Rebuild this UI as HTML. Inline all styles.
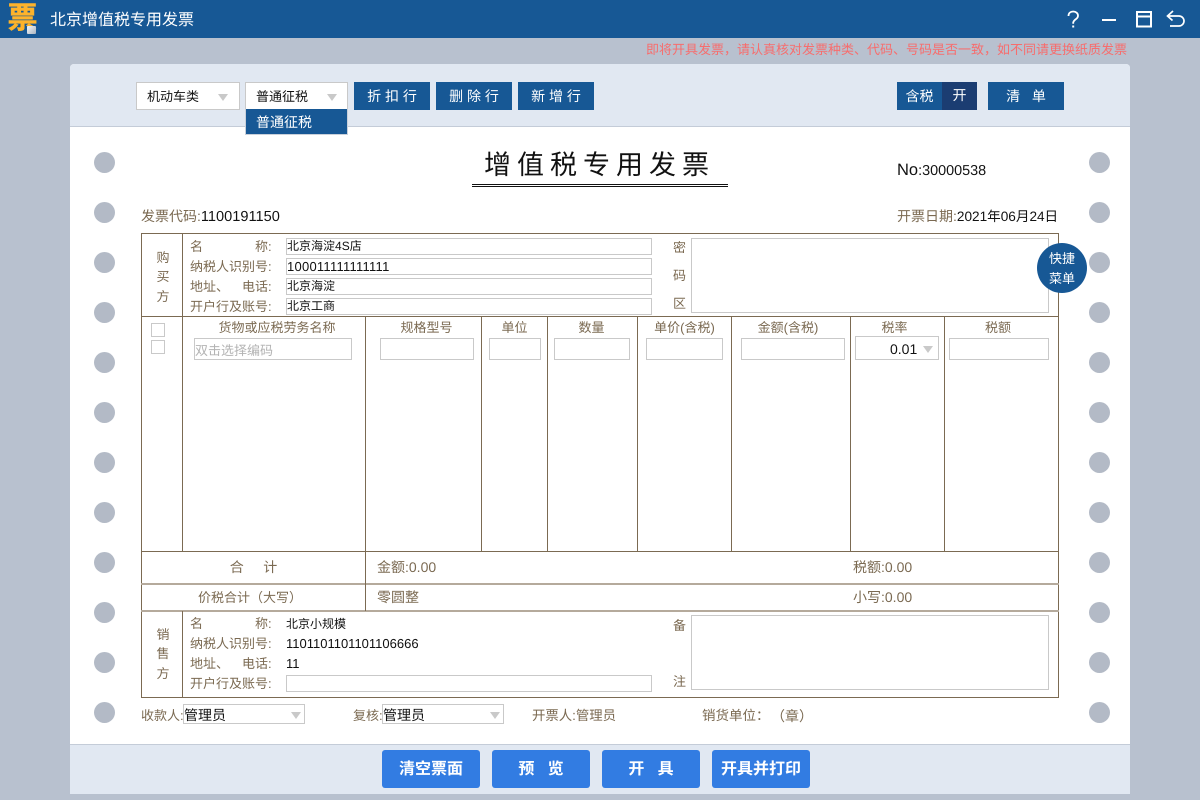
<!DOCTYPE html>
<html lang="zh">
<head>
<meta charset="utf-8">
<title>北京增值税专用发票</title>
<style>
html,body{margin:0;padding:0;width:1200px;height:800px;overflow:hidden;background:#b8c1cf}
body{position:relative;font-family:"Liberation Sans","Noto Sans CJK SC",sans-serif;font-size:13px;color:#7b6a52;text-rendering:geometricPrecision}
div,span{position:absolute;box-sizing:border-box}
.t{white-space:nowrap;line-height:18px;height:18px;margin-top:1px}
.f{font-size:14px}
.k{color:#111}
.c{text-align:center}
.h{background:#7b6a52;height:1px}
.v{background:#7b6a52;width:1px}
.box{background:#fff;border:1px solid #c9c9c9;white-space:nowrap;color:#111}
.val{font-size:12px;line-height:15px;padding-left:0}
.num{position:static;font-size:13px}
.btn{background:#175895;color:#fff;text-align:center;height:28px;line-height:28px;top:82px;white-space:nowrap;font-size:14px}
.sel{background:#fff;border:1px solid #c9c9c9;color:#111;white-space:nowrap}
.tri{width:0;height:0;border-left:5px solid transparent;border-right:5px solid transparent;border-top:7px solid #c9c9c9}
.hole{width:21px;height:21px;border-radius:50%;background:#b3bac6}
.b2{background:#327ce2;color:#fff;font-size:16px;font-weight:bold;text-align:center;height:38px;line-height:40px;top:750px;width:98px;border-radius:3px;white-space:nowrap}
</style>
</head>
<body>
<!-- top bar -->
<div style="left:0;top:0;width:1200px;height:38px;background:#175895"></div>
<div style="left:7px;top:1px;width:31px;height:38px;line-height:36px;font-size:30px;font-weight:bold;color:#fdb32b;text-align:center;white-space:nowrap;-webkit-text-stroke:.5px #fdb32b">票</div>
<div style="left:27px;top:26px;width:9px;height:8px;background:linear-gradient(135deg,#f4f6f8,#aab4c0);border-radius:1px"></div>
<div class="t" style="left:50px;top:11px;font-size:16px;color:#fff">北京增值税专用发票</div>
<svg style="position:absolute;left:1060px;top:6px" width="140" height="26" viewBox="0 0 140 26" fill="none" stroke="#fff">
<path d="M8.500 10c0-3 2-4.500 4.700-4.500s4.800 1.800 4.800 4.200c0 3.800-4.800 3.600-4.800 7.300v.8" stroke-width="1.800"/>
<path d="M13.200 19.500v2" stroke-width="2"/>
<path d="M42 14h14" stroke-width="2"/>
<path d="M77 6h14v14.500h-14zM77 10.500h14" stroke-width="2"/>
<path d="M108 10h11c3 0 5 2.500 5 5s-2 5-5 5h-9" stroke-width="1.700"/>
<path d="M113 5l-5.500 5 5 4.500" stroke-width="1.700"/>
</svg>
<div class="t" style="left:646px;top:40px;font-size:13px;color:#f76d6d">即将开具发票，请认真核对发票种类、代码、号码是否一致，如不同请更换纸质发票</div>

<!-- card -->
<div style="left:70px;top:64px;width:1060px;height:730px;background:#fff;border-radius:4px 4px 0 0;overflow:hidden"></div>
<div style="left:70px;top:64px;width:1060px;height:63px;background:#e1e8f2;border-bottom:1px solid #c4ccd8;border-radius:4px 4px 0 0"></div>
<div style="left:70px;top:744px;width:1060px;height:50px;background:#e1e8f2;border-top:1px solid #c4ccd8"></div>

<!-- toolbar -->
<div class="sel" style="left:136px;top:82px;width:104px;height:28px;line-height:28px;padding-left:10px">机动车类</div>
<div class="tri" style="left:218px;top:94px"></div>
<div class="sel" style="left:245px;top:82px;width:103px;height:28px;line-height:28px;padding-left:10px">普通征税</div>
<div class="tri" style="left:327px;top:94px"></div>
<div style="left:245px;top:109px;width:103px;height:26px;background:#175895;border:1px solid #c9d0da;border-top:0;color:#fff;line-height:27px;padding-left:10px;white-space:nowrap;font-size:14px">普通征税</div>
<div class="btn" style="left:354px;width:76px">折 扣 行</div>
<div class="btn" style="left:436px;width:76px">删 除 行</div>
<div class="btn" style="left:518px;width:76px">新 增 行</div>
<div class="btn" style="left:897px;width:45px">含税</div>
<div class="btn" style="left:942px;width:35px;background:#1b3d72;line-height:26px">开</div>
<div class="btn" style="left:988px;width:76px">清&nbsp;&nbsp;&nbsp;单</div>

<!-- holes -->
<div class="hole" style="left:94px;top:152px"></div><div class="hole" style="left:1089px;top:152px"></div>
<div class="hole" style="left:94px;top:202px"></div><div class="hole" style="left:1089px;top:202px"></div>
<div class="hole" style="left:94px;top:252px"></div><div class="hole" style="left:1089px;top:252px"></div>
<div class="hole" style="left:94px;top:302px"></div><div class="hole" style="left:1089px;top:302px"></div>
<div class="hole" style="left:94px;top:352px"></div><div class="hole" style="left:1089px;top:352px"></div>
<div class="hole" style="left:94px;top:402px"></div><div class="hole" style="left:1089px;top:402px"></div>
<div class="hole" style="left:94px;top:452px"></div><div class="hole" style="left:1089px;top:452px"></div>
<div class="hole" style="left:94px;top:502px"></div><div class="hole" style="left:1089px;top:502px"></div>
<div class="hole" style="left:94px;top:552px"></div><div class="hole" style="left:1089px;top:552px"></div>
<div class="hole" style="left:94px;top:602px"></div><div class="hole" style="left:1089px;top:602px"></div>
<div class="hole" style="left:94px;top:652px"></div><div class="hole" style="left:1089px;top:652px"></div>
<div class="hole" style="left:94px;top:702px"></div><div class="hole" style="left:1089px;top:702px"></div>

<!-- title -->
<div style="left:484px;top:147px;width:240px;height:36px;line-height:36px;font-size:27px;letter-spacing:6px;color:#111;white-space:nowrap">增值税专用发票</div>
<div style="left:472px;top:184px;width:256px;height:3px;border-top:1px solid #111;border-bottom:1px solid #111"></div>
<div class="t k" style="left:897px;top:160px;font-size:14.400px"><span style="position:static;font-size:16.500px">No</span>:30000538</div>
<div class="t f" style="left:141px;top:206px">发票代码:<span class="k" style="position:static;font-size:14.600px">1100191150</span></div>
<div class="t f" style="left:897px;top:206px">开票日期:<span class="k" style="position:static;font-size:13.600px">2021年06月24日</span></div>

<!-- table frame -->
<div style="left:141px;top:233px;width:918px;height:465px;border:1px solid #7b6a52"></div>
<div class="h" style="left:141px;top:316px;width:918px"></div>
<div class="h" style="left:141px;top:551px;width:918px"></div>
<div class="h" style="left:141px;top:583px;width:918px;height:2px;background:#b5aa9c"></div>
<div class="h" style="left:141px;top:610px;width:918px;height:2px;background:#b5aa9c"></div>
<div class="v" style="left:182px;top:233px;height:318px"></div>
<div class="v" style="left:182px;top:611px;height:87px"></div>
<div class="v" style="left:365px;top:316px;height:295px"></div>
<div class="v" style="left:481px;top:316px;height:235px"></div>
<div class="v" style="left:547px;top:316px;height:235px"></div>
<div class="v" style="left:637px;top:316px;height:235px"></div>
<div class="v" style="left:731px;top:316px;height:235px"></div>
<div class="v" style="left:850px;top:316px;height:235px"></div>
<div class="v" style="left:944px;top:316px;height:235px"></div>

<!-- buyer -->
<div class="t c" style="left:143px;top:248px;width:40px">购</div>
<div class="t c" style="left:143px;top:267px;width:40px">买</div>
<div class="t c" style="left:143px;top:287px;width:40px">方</div>
<div class="t" style="left:190px;top:237px">名</div><div class="t" style="left:255px;top:237px">称:</div>
<div class="t" style="left:190px;top:257px">纳税人识别号:</div>
<div class="t" style="left:190px;top:277px">地址、</div><div class="t" style="left:242px;top:277px">电话:</div>
<div class="t" style="left:190px;top:297px">开户行及账号:</div>
<div class="box val" style="left:286px;top:238px;width:366px;height:17px">北京海淀<span class="num" style="font-size:12px">4S</span>店</div>
<div class="box val" style="left:286px;top:258px;width:366px;height:17px"><span class="num" style="letter-spacing:.25px">100011111111111</span></div>
<div class="box val" style="left:286px;top:278px;width:366px;height:17px">北京海淀</div>
<div class="box val" style="left:286px;top:298px;width:366px;height:17px">北京工商</div>
<div class="t" style="left:673px;top:238px">密</div>
<div class="t" style="left:673px;top:266px">码</div>
<div class="t" style="left:673px;top:294px">区</div>
<div class="box" style="left:691px;top:238px;width:358px;height:75px"></div>
<div style="left:1037px;top:243px;width:50px;height:50px;border-radius:50%;background:#175895"></div>
<div class="t c" style="left:1037px;top:249px;width:50px;color:#fff">快捷</div>
<div class="t c" style="left:1037px;top:269px;width:50px;color:#fff">菜单</div>

<!-- goods headers -->
<div class="box" style="left:151px;top:323px;width:14px;height:14px"></div>
<div class="box" style="left:151px;top:340px;width:14px;height:14px"></div>
<div class="t c" style="left:186px;top:318px;width:182px">货物或应税劳务名称</div>
<div class="t c" style="left:369px;top:318px;width:115px">规格型号</div>
<div class="t c" style="left:482px;top:318px;width:65px">单位</div>
<div class="t c" style="left:547px;top:318px;width:89px">数量</div>
<div class="t c" style="left:638px;top:318px;width:93px">单价(含税)</div>
<div class="t c" style="left:729px;top:318px;width:118px">金额(含税)</div>
<div class="t c" style="left:848px;top:318px;width:93px">税率</div>
<div class="t c" style="left:941px;top:318px;width:114px">税额</div>
<div class="box" style="left:194px;top:338px;width:158px;height:22px;line-height:23px;color:#b3b3b3">双击选择编码</div>
<div class="box" style="left:380px;top:338px;width:94px;height:22px"></div>
<div class="box" style="left:489px;top:338px;width:52px;height:22px"></div>
<div class="box" style="left:554px;top:338px;width:76px;height:22px"></div>
<div class="box" style="left:646px;top:338px;width:77px;height:22px"></div>
<div class="box" style="left:741px;top:338px;width:104px;height:22px"></div>
<div class="box" style="left:855px;top:336px;width:84px;height:24px;line-height:25px;padding-left:34px;font-size:14px">0.01</div>
<div class="tri" style="left:923px;top:346px"></div>
<div class="box" style="left:949px;top:338px;width:100px;height:22px"></div>

<!-- totals -->
<div class="t c f" style="left:142px;top:557px;width:223px">合&nbsp;&nbsp;&nbsp;&nbsp;&nbsp;计</div>
<div class="t f" style="left:377px;top:557px">金额:0.00</div>
<div class="t f" style="left:853px;top:557px">税额:0.00</div>
<div class="t c" style="left:142px;top:588px;width:216px">价税合计（大写）</div>
<div class="t f" style="left:377px;top:587px">零圆整</div>
<div class="t f" style="left:853px;top:587px">小写:0.00</div>

<!-- seller -->
<div class="t c" style="left:143px;top:625px;width:40px">销</div>
<div class="t c" style="left:143px;top:644px;width:40px">售</div>
<div class="t c" style="left:143px;top:664px;width:40px">方</div>
<div class="t" style="left:190px;top:614px">名</div><div class="t" style="left:255px;top:614px">称:</div>
<div class="t" style="left:190px;top:634px">纳税人识别号:</div>
<div class="t" style="left:190px;top:654px">地址、</div><div class="t" style="left:242px;top:654px">电话:</div>
<div class="t" style="left:190px;top:674px">开户行及账号:</div>
<div class="t k" style="left:286px;top:614px;font-size:12px">北京小规模</div>
<div class="t k" style="left:286px;top:634px;font-size:13px">1101101101101106666</div>
<div class="t k" style="left:286px;top:654px;font-size:13px">11</div>
<div class="box" style="left:286px;top:675px;width:366px;height:17px"></div>
<div class="t" style="left:673px;top:616px">备</div>
<div class="t" style="left:673px;top:672px">注</div>
<div class="box" style="left:691px;top:615px;width:358px;height:75px"></div>

<!-- footer fields -->
<div class="t" style="left:141px;top:706px">收款人:</div>
<div class="sel" style="left:183px;top:704px;width:122px;height:20px;line-height:21px;font-size:14px">管理员</div>
<div class="tri" style="left:291px;top:712px"></div>
<div class="t" style="left:353px;top:706px">复核:</div>
<div class="sel" style="left:382px;top:704px;width:122px;height:20px;line-height:21px;font-size:14px">管理员</div>
<div class="tri" style="left:490px;top:712px"></div>
<div class="t" style="left:532px;top:706px;font-size:13.400px">开票人:管理员</div>
<div class="t" style="left:702px;top:706px;font-size:13.500px">销货单位：</div>
<div class="t f" style="left:771px;top:706px">（章）</div>

<!-- bottom buttons -->
<div class="b2" style="left:382px">清空票面</div>
<div class="b2" style="left:492px">预&nbsp;&nbsp;&nbsp;览</div>
<div class="b2" style="left:602px">开&nbsp;&nbsp;&nbsp;具</div>
<div class="b2" style="left:712px">开具并打印</div>
</body>
</html>
